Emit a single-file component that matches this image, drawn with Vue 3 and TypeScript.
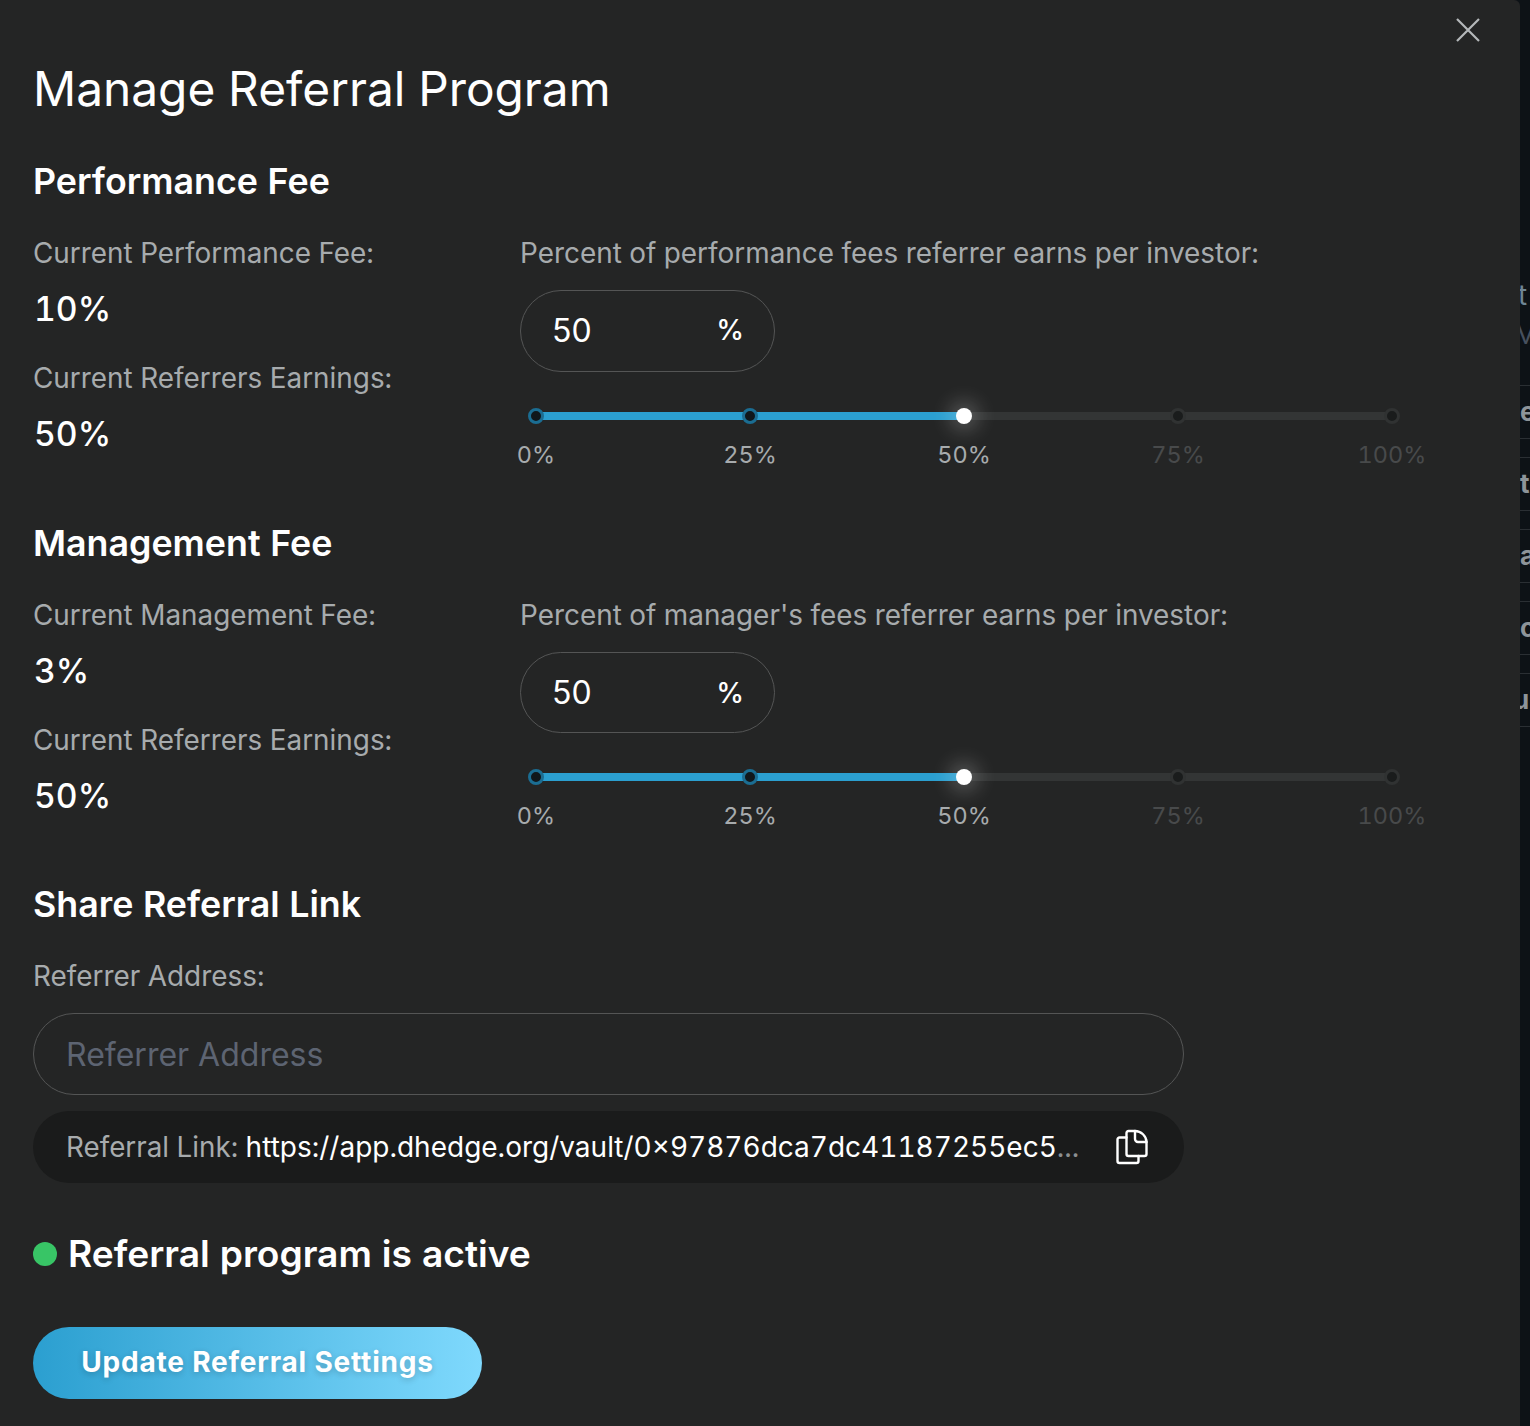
<script setup lang="ts">
interface Fee {
  title: string
  currentLabel: string
  current: string
  percentLabel: string
}
const fees: Fee[] = [
  { title: 'Performance Fee', currentLabel: 'Current Performance Fee:', current: '10%', percentLabel: 'Percent of performance fees referrer earns per investor:' },
  { title: 'Management Fee', currentLabel: 'Current Management Fee:', current: '3%', percentLabel: "Percent of manager's fees referrer earns per investor:" },
]
const marks = [0, 25, 50, 75, 100]
const value = 50
const backdropRows = ['e', 't', 'a', 'c', 'u']
</script>

<template>
  <div class="page">
    <div class="backdrop">
      <div class="bd-text"><span class="bd-t">t</span><span class="bd-m">M</span></div>
      <div v-for="r in backdropRows" :key="r" class="bd-row">{{ r }}</div>
    </div>
    <main class="modal">
      <button class="close" aria-label="Close">
        <svg width="24" height="24" viewBox="0 0 24 24" fill="none" stroke="#b4b8ba" stroke-width="2.2">
          <path d="M1 1 L23 23 M23 1 L1 23" />
        </svg>
      </button>
      <h1 class="title">Manage Referral Program</h1>

      <section v-for="fee in fees" :key="fee.title" class="fee">
        <h2 class="heading">{{ fee.title }}</h2>
        <div class="fee-body">
          <div class="fee-left">
            <div class="label">{{ fee.currentLabel }}</div>
            <div class="stat">{{ fee.current }}</div>
            <div class="label second">Current Referrers Earnings:</div>
            <div class="stat">50%</div>
          </div>
          <div class="fee-right">
            <div class="label">{{ fee.percentLabel }}</div>
            <div class="pct-box">
              <input class="pct-input" value="50" />
              <span class="pct-sign">%</span>
            </div>
            <div class="slider">
              <div class="track" :style="{ background: `linear-gradient(to right, #2b9fd0 ${value}%, #333535 ${value}%)` }">
                <span
                  v-for="m in marks"
                  :key="m"
                  class="dot"
                  :class="{ on: m < value, handle: m === value }"
                ></span>
              </div>
              <div class="marks">
                <span v-for="m in marks" :key="m" class="mark" :class="{ dim: m > value }">{{ m }}%</span>
              </div>
            </div>
          </div>
        </div>
      </section>

      <section class="share">
        <h2 class="heading">Share Referral Link</h2>
        <div class="label">Referrer Address:</div>
        <input class="addr" placeholder="Referrer Address" />
        <div class="link">
          <span class="link-text"><span class="link-label">Referral Link: </span><span class="url">https://app.dhedge.org/vault/0×97876dca7dc41187255ec5</span><span class="ell">...</span></span>
          <svg class="copy" width="32" height="36" viewBox="0 0 32 36" fill="none" stroke="#fff" stroke-width="2.4" stroke-linejoin="round" stroke-linecap="round">
            <path d="M10.5 8.5 H3.5 a2 2 0 0 0 -2 2 V32 a2 2 0 0 0 2 2 H20.5 a2 2 0 0 0 2 -2 V27" />
            <path d="M12.5 2 H19 C25 2 30.5 7 30.5 13 V25 a2 2 0 0 1 -2 2 H12.5 a2 2 0 0 1 -2 -2 V4 a2 2 0 0 1 2 -2 Z" />
            <path d="M19 2 V10 a3 3 0 0 0 3 3 H30.5" />
          </svg>
        </div>
      </section>

      <div class="status"><span class="led"></span><span>Referral program is active</span></div>
      <button class="update">Update Referral Settings</button>
    </main>
  </div>
</template>

<style>
html, body { margin: 0; background: #0d1216; }
</style>

<style scoped>
.page {
  position: relative;
  width: 1530px;
  height: 1426px;
  overflow: hidden;
  background: #0d1216;
  font-family: Inter, "Noto Sans", sans-serif;
  font-variant-numeric: tabular-nums;
}
.backdrop {
  position: absolute;
  left: 1518px;
  top: 0;
  width: 12px;
  height: 100%;
  color: #8d9499;
  overflow: hidden;
}
.bd-text { position: absolute; left: 0; top: 278px; display: flex; flex-direction: column; font-size: 28px; line-height: 34px; color: #6e8594; }
.bd-m { margin-left: -4px; font-size: 26px; line-height: 46px; color: #46505e; }
.bd-row {
  position: absolute;
  left: 2px;
  width: 12px;
  height: 52px;
  border-top: 1px solid #2a2f33;
  border-bottom: 1px solid #2a2f33;
  font-weight: 700;
  font-size: 26px;
  line-height: 52px;
}
.bd-row:nth-child(2) { top: 385px; }
.bd-row:nth-child(3) { top: 457px; }
.bd-row:nth-child(4) { top: 529px; }
.bd-row:nth-child(5) { top: 601px; }
.bd-row:nth-child(6) { top: 673px; text-indent: -7px; }

.modal {
  position: relative;
  box-sizing: border-box;
  width: 1520px;
  height: 1426px;
  padding: 56px 33px 0;
  background: #242525;
  border-top-right-radius: 6px;
  color: #fff;
}
.close {
  position: absolute;
  top: 18px;
  right: 40px;
  padding: 0;
  width: 24px;
  height: 24px;
  border: 0;
  background: none;
}
.close svg { display: block; }
.title {
  margin: 0;
  font-size: 47.8px;
  line-height: 66px;
  font-weight: 400;
}
.fee { margin-top: 34px; }
.fee + .fee { margin-top: 48px; }
.heading {
  margin: 0;
  font-size: 35.8px;
  line-height: 50px;
  font-weight: 600;
}
.fee-body { display: flex; margin-top: 29px; }
.fee-left { width: 487px; flex: none; }
.fee-right { flex: 1; }
.label {
  font-size: 27.9px;
  line-height: 36px;
  color: #a7abad;
}
.second { margin-top: 31px; }
.stat {
  margin-top: 18px;
  padding-left: 1px;
  font-size: 33.7px;
  line-height: 40px;
  font-weight: 500;
}
.pct-box {
  box-sizing: border-box;
  display: flex;
  align-items: center;
  width: 255px;
  height: 82px;
  margin-top: 19px;
  padding: 0 30px 2px 31px;
  border: 1px solid #545555;
  border-radius: 41px;
}
.fee + .fee .pct-box { height: 81px; padding-bottom: 0; }
.pct-input {
  flex: 1;
  min-width: 0;
  padding: 0;
  border: 0;
  outline: 0;
  background: none;
  color: #fff;
  font: 400 32px Inter, sans-serif;
}
.pct-sign { font-size: 28px; font-weight: 500; }
.slider { width: 856px; margin: 40px 0 0 16px; }
.track {
  display: flex;
  justify-content: space-between;
  align-items: center;
  height: 8px;
}
.dot {
  box-sizing: border-box;
  width: 16px;
  height: 16px;
  flex: none;
  border-radius: 50%;
  border: 3px solid #303232;
  background: #1a1c1c;
}
.dot:first-child { margin-left: -8px; }
.dot:last-child { margin-right: -8px; }
.dot.on { border-color: #1b6d92; background: #10171b; }
.dot.handle {
  border: 0;
  background: #fff;
  box-shadow: 0 0 20px 6px rgba(255, 255, 255, 0.25);
}
.marks {
  display: flex;
  justify-content: space-between;
  margin: 20px -30px 0;
}
.mark {
  width: 60px;
  white-space: nowrap;
  font-size: 23.5px;
  line-height: 30px;
  color: #a7abad;
  display: flex;
  justify-content: center;
}
.mark.dim { color: #484a4b; }
.share { margin-top: 48px; }
.share .label { margin-top: 29px; }
.addr {
  box-sizing: border-box;
  display: block;
  width: 1151px;
  height: 82px;
  margin: 19px 0 0;
  padding: 0 32px;
  border: 1px solid #545555;
  border-radius: 41px;
  outline: 0;
  background: none;
  color: #fff;
  font: 400 32px Inter, sans-serif;
}
.addr::placeholder { color: #5d6472; opacity: 1; }
.link {
  display: flex;
  align-items: center;
  justify-content: space-between;
  box-sizing: border-box;
  width: 1151px;
  height: 72px;
  margin: 16px 0 0;
  padding: 0 36px 0 33px;
  border-radius: 36px;
  background: #1a1b1b;
  font-size: 27.8px;
  white-space: nowrap;
}
.url { font-size: 28px; }
.link-label { color: #a7abad; }
.ell { color: #8b8f91; }
.copy { flex: none; }
.status {
  display: flex;
  align-items: center;
  gap: 11px;
  margin: 47px 0 0;
  font-size: 37.15px;
  line-height: 48px;
  font-weight: 600;
}
.led { width: 24px; height: 24px; border-radius: 50%; background: #38c566; flex: none; }
.update {
  display: block;
  width: 449px;
  height: 72px;
  margin: 49px 0 0;
  padding: 0 0 2px;
  border: 0;
  border-radius: 36px;
  background: linear-gradient(90deg, #2b9fd0, #7fd9fd);
  color: #fff;
  font: 700 28px Inter, sans-serif;
  letter-spacing: 0.8px;
  text-shadow: 0 2px 6px rgba(0, 0, 0, 0.2);
}
</style>
